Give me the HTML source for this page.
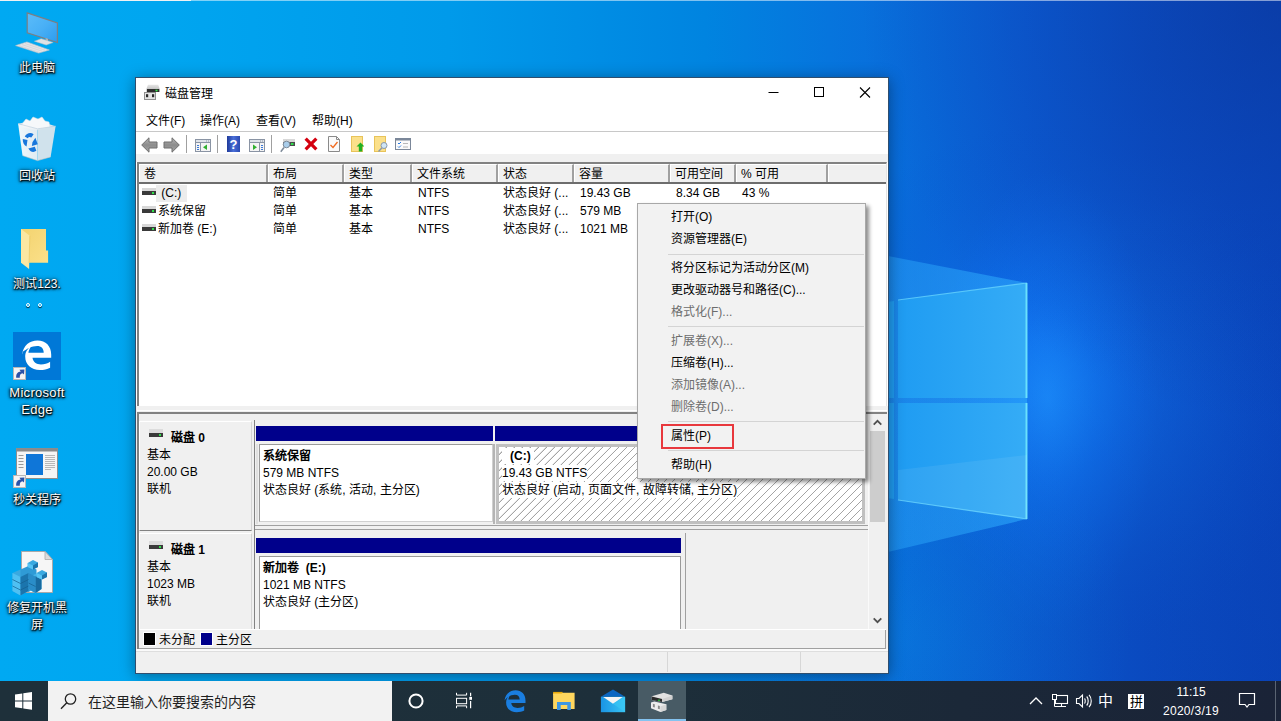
<!DOCTYPE html>
<html lang="zh-CN">
<head>
<meta charset="utf-8">
<title>磁盘管理</title>
<style>
*{box-sizing:border-box;margin:0;padding:0}
html,body{width:1281px;height:721px;overflow:hidden}
body{font-family:"Liberation Sans",sans-serif;font-size:12px;color:#000;position:relative;background:#0a5fd6}
.abs{position:absolute}
.cj{display:inline-block;white-space:nowrap;vertical-align:baseline}
#wall{position:absolute;left:0;top:0;width:1281px;height:721px}
/* desktop icons */
.dlabel{position:absolute;margin-top:1px;width:90px;text-align:center;color:#fff;font-size:12px;line-height:17px;text-shadow:0 1px 2px #000,0 1px 3px rgba(0,0,0,.9),0 0 4px rgba(0,0,0,.7),1px 1px 1px rgba(0,0,0,.8)}
/* window */
#win{position:absolute;left:135px;top:77px;width:754px;height:597px;background:#fff;border:1px solid #2f4e6e;box-shadow:0 2px 14px rgba(0,0,0,.38)}
#title{position:absolute;left:0;top:0;width:752px;height:30px;background:#fff}
#title .t{position:absolute;left:29px;top:8px;font-size:12px;line-height:16px}
#menubar{position:absolute;left:0;top:30px;width:752px;height:24px;background:#fff;border-bottom:1px solid #c8c8c8}
#menubar>span{position:absolute;top:5px;font-size:12px;line-height:16px;white-space:nowrap}
#toolbar{position:absolute;left:0;top:54px;width:752px;height:22px;background:#fff}
#gap1{position:absolute;left:0;top:76px;width:752px;height:8px;background:#f0f0f0}
.tsep{position:absolute;top:3px;width:1px;height:18px;background:#a0a0a0}
/* list */
#list{position:absolute;left:1px;top:84px;width:750px;height:246px;background:#fff;border-top:2px solid #828282;border-left:2px solid #828282;border-right:1px solid #e3e3e3}
#lhead{position:absolute;left:0;top:0;width:747px;height:20px;background:#f0f0f0;border-bottom:2px solid #6d6d6d}
.hc{position:absolute;top:0;height:18px;border-right:2px solid #a0a0a0;border-left:1px solid #fff;border-top:1px solid #fff;font-size:12px;line-height:18px;padding-left:4px;white-space:nowrap;background:#f0f0f0}
.cell{position:absolute;margin-top:1px;font-size:12px;line-height:16px;white-space:nowrap}
</style>
</head>
<body>
<svg id="wall" width="1281" height="721" viewBox="0 0 1281 721">
<defs>
<linearGradient id="wg" x1="0" y1="0" x2="1" y2="0">
<stop offset="0" stop-color="#00a9f2"/><stop offset="0.12" stop-color="#00a6f0"/><stop offset="0.35" stop-color="#009aea"/><stop offset="0.55" stop-color="#0084e0"/><stop offset="0.68" stop-color="#0870dc"/><stop offset="0.8" stop-color="#0b5cd6"/><stop offset="0.9" stop-color="#0b50cc"/><stop offset="1" stop-color="#0a48c4"/>
</linearGradient>
<radialGradient id="glow" cx="1045" cy="395" r="270" gradientUnits="userSpaceOnUse">
<stop offset="0" stop-color="#1c8cf8" stop-opacity=".95"/><stop offset="0.3" stop-color="#1274ec" stop-opacity=".6"/><stop offset="1" stop-color="#0a55cc" stop-opacity="0"/>
</radialGradient>
<radialGradient id="glow2" cx="1048" cy="400" r="1" gradientUnits="userSpaceOnUse" gradientTransform="translate(1048 400) scale(110 230) translate(-1048 -400)">
<stop offset="0" stop-color="#1a8cff" stop-opacity=".85"/><stop offset="0.45" stop-color="#0f78f8" stop-opacity=".45"/><stop offset="1" stop-color="#0c6cf0" stop-opacity="0"/>
</radialGradient>
<radialGradient id="glow3" cx="900" cy="640" r="230" gradientUnits="userSpaceOnUse">
<stop offset="0" stop-color="#0a86ea" stop-opacity=".5"/><stop offset="1" stop-color="#0a86ea" stop-opacity="0"/>
</radialGradient>
<radialGradient id="vtr" cx="1281" cy="0" r="420" gradientUnits="userSpaceOnUse">
<stop offset="0" stop-color="#0a3696" stop-opacity=".6"/><stop offset="1" stop-color="#0a3a9c" stop-opacity="0"/>
</radialGradient>
<radialGradient id="vbr" cx="1281" cy="721" r="520" gradientUnits="userSpaceOnUse">
<stop offset="0" stop-color="#08389c" stop-opacity=".35"/><stop offset="1" stop-color="#062f8e" stop-opacity="0"/>
</radialGradient>
<linearGradient id="pane" x1="0" y1="0" x2="1" y2="0">
<stop offset="0" stop-color="#1f9cf2"/><stop offset="1" stop-color="#35acf6"/>
</linearGradient>
<linearGradient id="beam" x1="1" y1="0" x2="0" y2="0">
<stop offset="0" stop-color="#30b0ff" stop-opacity=".55"/><stop offset=".35" stop-color="#30b0ff" stop-opacity=".38"/><stop offset="1" stop-color="#30b0ff" stop-opacity="0"/>
</linearGradient>
</defs>
<rect width="1281" height="721" fill="url(#wg)"/>
<rect width="1281" height="721" fill="url(#glow)"/>
<rect width="1281" height="721" fill="url(#glow2)"/>
<rect width="1281" height="721" fill="url(#glow3)"/>
<rect width="1281" height="721" fill="url(#vtr)"/>
<rect width="1281" height="721" fill="url(#vbr)"/>
<polygon points="1027,283 600,200 600,620 1027,519" fill="url(#beam)"/>
<polygon points="898,300 1027,283 1027,398 898,398" fill="url(#pane)"/>
<polygon points="898,403 1027,403 1027,519 898,500" fill="url(#pane)"/>
<polygon points="880,303 894,301 894,398 880,398" fill="#1f9cf2"/>
<polygon points="880,403 894,403 894,499 880,497" fill="#1f9cf2"/>
<polyline points="898,300 1027,283" fill="none" stroke="#6fdcff" stroke-width="1.2" opacity=".7"/><path d="M1026.500 283V398" stroke="#6fe6ff" stroke-width="2" opacity=".9"/>
<polyline points="1027,519 898,500" fill="none" stroke="#6fdcff" stroke-width="1.2" opacity=".7"/><path d="M1026.500 403V519" stroke="#6fe6ff" stroke-width="2" opacity=".9"/><polygon points="898,470 1027,455 1027,519 898,500" fill="#fff" opacity=".07"/>
<rect x="0" y="0" width="191" height="1" fill="#eef1f3"/><rect x="191" y="0" width="1090" height="1" fill="#fff" opacity=".5"/>
</svg>
<svg class="abs" style="left:12px;top:8px" width="52" height="50" viewBox="12 8 52 50">
<defs><linearGradient id="scr" x1="0" y1="0" x2="1" y2="1"><stop offset="0" stop-color="#5bbcf9"/><stop offset=".5" stop-color="#49b0f6"/><stop offset="1" stop-color="#2c9cee"/></linearGradient></defs>

<path d="M27.200 12.900L57.400 22.900V42.500L27.200 32.700z" fill="url(#scr)" stroke="#7b7f84" stroke-width="1.2"/>
<path d="M45.600 38l2.400 .8v3.500l-2.400-.8z" fill="#aeb4ba"/><path d="M34.400 41.200L41.200 38.700L53.100 42.500L46.200 45z" fill="#dfe2e5" stroke="#b9bec3" stroke-width=".5"/>
<path d="M15.600 45.600L26.900 41.900L49.400 50L38.700 53.100z" fill="#e2e4e7" stroke="#bfc3c8" stroke-width=".6"/>
<path d="M19 45.700l20 6.500M22 44.600l20 6.600M25 43.500l20 6.700" stroke="#c9cdd1" stroke-width=".6" fill="none"/>
</svg>
<div class="dlabel" style="left:-8px;top:59px"><span class="cj" style="width:3em">此电脑</span></div>
<svg class="abs" style="left:14px;top:114px" width="46" height="50" viewBox="14 114 46 50">
<defs><linearGradient id="bin" x1="0" y1="0" x2="1" y2="0"><stop offset="0" stop-color="#f9fbfc"/><stop offset="1" stop-color="#e9eef2"/></linearGradient></defs>
<path d="M18.100 123.700L36 120L55.600 126.200L37.500 128.800z" fill="#dbe6ee"/>
<path d="M22 124l4-5 4 2 3-4 5 2 4-2 3 4 4 1 1 5-14 3-13-3z" fill="#f6f8fa" stroke="#d9dfe4" stroke-width=".5"/>
<path d="M18.100 123.700L37.500 128.800L37.500 160.600L22.500 155.600z" fill="url(#bin)" opacity=".96"/>
<path d="M37.500 128.800L55.600 126.200L50.600 156.900L37.500 160.600z" fill="#dde5eb" opacity=".94"/>
<path d="M18.100 123.700L37.500 128.800L55.600 126.200" fill="none" stroke="#c7d6e2" stroke-width=".8"/>
<path transform="translate(29.500 142.500) scale(1.180) translate(-29.500 -142.500)" d="M25.500 137.500c1.500-3 5-4 7.500-2l-2 2.800c-1.200-.8-2.300-.5-3 .6zM34.500 138.500l2 5.500-5 1.500 .5-3.200zM23.800 139.500l4 .8-.8 5.500c-2.200-1.200-3.400-3.500-3.200-6.300zM28.500 147.500l5.500-1.300 1.300 3.300c-2.200 1.700-4.800 1.300-6.800-2z" fill="#1877dc"/>
<path d="M22.500 155.600L37.500 160.600L50.600 156.900" fill="none" stroke="#d9c9c0" stroke-width=".8" opacity=".7"/>
</svg>
<div class="dlabel" style="left:-8px;top:167px"><span class="cj" style="width:3em">回收站</span></div>
<svg class="abs" style="left:18px;top:226px" width="34" height="46" viewBox="18 226 34 46">
<defs><linearGradient id="fld" x1="0" y1="0" x2="1" y2="1"><stop offset="0" stop-color="#f3d36f"/><stop offset="1" stop-color="#fbe08a"/></linearGradient></defs>
<path d="M21 228.900H46V250.400H48.100V262.800H21z" fill="url(#fld)"/>
<path d="M21 228.900L29.800 235.800L29.100 269L21 262.800z" fill="#fbe7a2"/>
<path d="M29.800 235.800L29.100 262.800" stroke="#e6c35c" stroke-width=".6"/>
</svg>
<div class="dlabel" style="left:-8px;top:275px"><span class="cj" style="width:2em">测试</span>123.<br><span style="display:inline-block;width:12px;height:12px;vertical-align:top;position:relative"><i style="position:absolute;left:1px;top:10px;width:4px;height:4px;border:1px solid #fff;border-radius:50%;box-shadow:0 1px 1px rgba(0,0,0,.8)"></i></span><span style="display:inline-block;width:12px;height:12px;vertical-align:top;position:relative"><i style="position:absolute;left:1px;top:10px;width:4px;height:4px;border:1px solid #fff;border-radius:50%;box-shadow:0 1px 1px rgba(0,0,0,.8)"></i></span></div>
<svg class="abs" style="left:13px;top:332px" width="48" height="48" viewBox="0 0 48 48">
<rect width="48" height="48" fill="#0078d7"/>
<path d="M9 22.500C10.500 13.500 16.500 8.600 24.500 8.600c8.300 0 13.700 5.600 13.700 14v3.200H19.500c.5 4.300 3.900 6.600 8.500 6.600 3.400 0 6.500-.9 9.100-2.600v5.900c-2.800 1.500-6.300 2.300-10.200 2.300-8.800 0-14.700-5.200-14.700-13.400 0-4.500 2.400-8.400 6.400-10.600-2 2.100-3 4.700-3.200 6.800h15.300c0-4-2.400-6.700-6.600-6.700-5.300 0-10.500 2.800-15.100 6.400z" fill="#fff"/>
<rect x="0.500" y="35.500" width="12" height="12" fill="#f4f4f4" stroke="#b8b8b8"/>
<path d="M3.200 45.800C3 41.500 4.800 39.600 7.800 39.400L6.400 37.800L11.400 37.600L11 42.600L9.500 41.200C7.500 41.400 6.600 43 6.800 45.800z" fill="#2a52a8"/>
</svg>
<div class="dlabel" style="left:-8px;top:383px;font-size:13px;letter-spacing:.3px">Microsoft<br>Edge</div>
<svg class="abs" style="left:13px;top:447px" width="46" height="42" viewBox="13 447 46 42">
<rect x="16.500" y="448.500" width="41" height="30" fill="#f5f5f5" stroke="#8e8e8e"/>
<rect x="16.500" y="448.500" width="41" height="3" fill="#8a8a8a"/>
<rect x="26" y="454" width="17" height="21" fill="#0f76d8"/>
<path d="M18.500 455.500h5M18.500 458.500h5M18.500 461.500h5M18.500 464.500h5M18.500 467.500h5" stroke="#9a9a9a" stroke-width="1"/>
<path d="M45 455.500h10M45 457.500h10M45 459.500h10M45 461.500h10M45 463.500h10M45 465.500h10M45 467.500h10M45 469.500h6" stroke="#a8a8a8" stroke-width=".8"/>
<rect x="13.500" y="475.500" width="12" height="12" fill="#f4f4f4" stroke="#b8b8b8"/>
<path d="M16.200 485.800C16 481.500 17.800 479.600 20.800 479.400L19.400 477.800L24.400 477.600L24 482.600L22.500 481.200C20.500 481.400 19.600 483 19.800 485.800z" fill="#2a52a8"/>
</svg>
<div class="dlabel" style="left:-8px;top:491px"><span class="cj" style="width:4em">秒关程序</span></div>
<svg class="abs" style="left:10px;top:549px" width="46" height="50" viewBox="10 549 46 50">
<path d="M21.500 551.500H45L52.500 559.500V592.500H21.500z" fill="#f6f6f6" stroke="#a9a9a9"/>
<path d="M45 551.500V559.500H52.500z" fill="#dcdcdc" stroke="#a9a9a9" stroke-width=".8"/>
<g>
<path d="M12.500 573l8-3.500 8 3.500v18l-8 4.500-8-4.500z" fill="#3aa9e0"/>
<path d="M20.500 569.500l8-3.500 8 3.500v18l-8 4.500-8-4.500z" fill="#2f9bd6"/>
<path d="M28.500 577l7-3 6 3v12l-6 4.500-7-4.500z" fill="#43b3e8"/>
<path d="M12.500 573l8 4v18.500l-8-4.500z" fill="#4fc0f2"/>
<path d="M20.500 577l8-4v18l-8 4.500z" fill="#1b75ad"/>
<path d="M28.500 573l7 3.500v16.500l-7-4z" fill="#2a8dc8"/>
<path d="M35.500 576.500l6-3v15.500l-6 4z" fill="#186a9f"/>
<path d="M12.500 579.500l8 4M12.500 586l8 4M20.500 583.500l8-4M20.500 590l8-4M28.500 583l7 3.500" stroke="#15608f" stroke-width=".7" fill="none"/>
<path d="M27.700 563l5.300-3 5 2.500v4.500l-5.300 2.500-5-2.500z" fill="#3aa9e0"/><path d="M33 565.500l5-3v4.500l-5 2.500z" fill="#1b75ad"/><path d="M27.700 563l5.300 2.500v4l-5.300-2.500z" fill="#56c4f4"/>
<path d="M36.500 573l5.500-3 5 2.500v4.500l-5.500 2.500-5-2.500z" fill="#3aa9e0"/><path d="M42 575.500l5-3v4.500l-5 2.500z" fill="#1b75ad"/><path d="M36.500 573l5.500 2.500v4l-5.500-2.500z" fill="#56c4f4"/>
</g>
</svg>
<div class="dlabel" style="left:-8px;top:599px"><span class="cj" style="width:5em">修复开机黑</span><br><span class="cj" style="width:1em">屏</span></div>
<div id="win">

<div id="title">
<svg class="abs" style="left:8px;top:6px" width="16" height="17" viewBox="0 0 16 17"><defs><linearGradient id="dtop" x1="0" y1="0" x2="0" y2="1"><stop offset="0" stop-color="#e6e6e6"/><stop offset="1" stop-color="#c4c4c4"/></linearGradient></defs><path d="M4 .8H14.200L15.700 5H2.400z" fill="url(#dtop)"/><rect x="2.800" y="5" width="12.600" height="3" fill="#2e2e2e"/><rect x="11.500" y="5.700" width="2" height="1.600" fill="#3bea4e"/><rect x=".5" y="8.500" width="11" height="7" fill="#e4e4e4" stroke="#909090"/><rect x="2" y="10.200" width="2.200" height="3" fill="#2a2a2a"/><rect x="8" y="10.200" width="2.200" height="3" fill="#2a2a2a"/></svg>
<div class="t"><span class="cj" style="width:4em">磁盘管理</span></div>
<svg class="abs" style="left:614px;top:0" width="138" height="30" viewBox="0 0 138 30"><path d="M18.5 14.5h10" stroke="#000" stroke-width="1" fill="none"/><rect x="64.5" y="9.5" width="9" height="9" fill="none" stroke="#000"/><path d="M110 9.5l10 10M120 9.5l-10 10" stroke="#000" stroke-width="1.1" fill="none"/></svg>
</div>
<div id="menubar"><span style="left:10px"><span class="cj" style="width:2em">文件</span>(F)</span><span style="left:64px"><span class="cj" style="width:2em">操作</span>(A)</span><span style="left:120px"><span class="cj" style="width:2em">查看</span>(V)</span><span style="left:176px"><span class="cj" style="width:2em">帮助</span>(H)</span></div>
<div id="toolbar"><svg class="abs" style="left:5px;top:5px" width="17" height="16" viewBox="0 0 17 16"><defs><linearGradient id="ag" x1="0" y1="0" x2="0" y2="1"><stop offset="0" stop-color="#b8b8b8"/><stop offset=".5" stop-color="#8c8c8c"/><stop offset="1" stop-color="#a8a8a8"/></linearGradient></defs><path d="M0.700 8L8 0.800V5H16V11H8V15.200z" fill="url(#ag)" stroke="#6e6e6e" stroke-width="1"/></svg>
<svg class="abs" style="left:27px;top:5px" width="17" height="16" viewBox="0 0 17 16"><path d="M16.300 8L9 0.800V5H1V11H9V15.200z" fill="url(#ag)" stroke="#6e6e6e" stroke-width="1"/></svg>
<div class="tsep" style="left:50px"></div>
<svg class="abs" style="left:59px;top:7px" width="16" height="13" viewBox="0 0 16 13"><rect x=".5" y=".5" width="15" height="12" fill="#f4f4f4" stroke="#8a94a4"/><rect x=".5" y=".5" width="15" height="3" fill="#dfe3ea" stroke="#8a94a4"/><path d="M5.500 3.500v9" stroke="#8a94a4"/><path d="M2 6.500h2M2 8.500h2M2 10.500h2" stroke="#3a78d8" stroke-width="1"/><path d="M11 2h1M13 2h1" stroke="#8a94a4" stroke-width="1"/><path d="M12 5.500L8 8.200l4 2.700z" fill="#2fae2f"/></svg>
<div class="tsep" style="left:81px"></div>
<svg class="abs" style="left:91px;top:4px" width="13" height="16" viewBox="0 0 13 16"><defs><linearGradient id="hg" x1="0" y1="0" x2="1" y2="0"><stop offset="0" stop-color="#1f3a9a"/><stop offset=".5" stop-color="#4a6fd8"/><stop offset="1" stop-color="#2a49b0"/></linearGradient></defs><rect width="13" height="16" fill="url(#hg)"/><text x="6.500" y="13" font-family="Liberation Sans" font-weight="bold" font-size="13" fill="#fff" text-anchor="middle">?</text></svg>
<svg class="abs" style="left:113px;top:7px" width="16" height="13" viewBox="0 0 16 13"><rect x=".5" y=".5" width="15" height="12" fill="#f4f4f4" stroke="#8a94a4"/><rect x=".5" y=".5" width="15" height="3" fill="#dfe3ea" stroke="#8a94a4"/><path d="M10.500 3.500v9" stroke="#8a94a4"/><path d="M12 6.500h2M12 8.500h2M12 10.500h2" stroke="#3a78d8" stroke-width="1"/><path d="M11 2h1M13 2h1" stroke="#8a94a4" stroke-width="1"/><path d="M4 5.500L8 8.200l-4 2.700z" fill="#2fae2f"/></svg>
<div class="tsep" style="left:135px"></div>
<svg class="abs" style="left:144px;top:6px" width="16" height="15" viewBox="0 0 16 15"><rect x="3" y="1" width="12" height="3" fill="#d8d8d8"/><rect x="3" y="4" width="12" height="4" fill="#4a4a4a"/><rect x="11" y="5" width="2.500" height="2" fill="#2fe04a"/><circle cx="6.500" cy="6.500" r="3.300" fill="#a9cdea" stroke="#7d8a99" stroke-width="1"/><path d="M4 9.500L.8 13.800" stroke="#7d8a99" stroke-width="1.500"/></svg>
<svg class="abs" style="left:168px;top:5px" width="14" height="14" viewBox="0 0 14 14"><path d="M.5 2.800L2.800 .5L7 4.700L11.200 .5L13.500 2.800L9.300 7L13.500 11.200L11.200 13.500L7 9.300L2.800 13.500L.5 11.200L4.700 7z" fill="#d4000f"/></svg>
<svg class="abs" style="left:192px;top:4px" width="12" height="16" viewBox="0 0 12 16"><path d="M.5.500H8.500L11.500 3.500V15.500H.5z" fill="#fafafa" stroke="#8a8a8a"/><path d="M8.500.5V3.500H11.500" fill="none" stroke="#8a8a8a"/><path d="M2.500 9L5 11.500L9.500 6" fill="none" stroke="#f06a1f" stroke-width="1.300"/></svg>
<svg class="abs" style="left:215px;top:4px" width="13" height="16" viewBox="0 0 13 16"><rect x=".5" y=".5" width="11" height="15" fill="#fbe08a" stroke="#e8c35a"/><path d="M9.500 6.500l4 4h-2.300v5H7.800v-5H5.500z" fill="#22b022"/></svg>
<svg class="abs" style="left:238px;top:4px" width="14" height="16" viewBox="0 0 14 16"><rect x=".5" y=".5" width="11" height="15" fill="#fbe08a" stroke="#e8c35a"/><circle cx="10" cy="9.500" r="3" fill="#cfe5f6" stroke="#8a98a8" stroke-width="1"/><path d="M7.800 12L4.500 15.500" stroke="#8a98a8" stroke-width="1.400"/></svg>
<svg class="abs" style="left:259px;top:6px" width="16" height="12" viewBox="0 0 16 12"><rect x=".5" y=".5" width="15" height="11" fill="#fafafa" stroke="#7b8799"/><rect x=".5" y=".5" width="15" height="2" fill="#7b8799"/><path d="M3 5l1 1 2-2M3 8.500l1 1 2-2" fill="none" stroke="#2a7ae0" stroke-width="1"/><path d="M8 5.500h5M8 9h5" stroke="#b8b8b8" stroke-width="1"/></svg></div>
<div id="gap1"></div>
<div id="list">
<div id="lhead">
<div class="hc" style="left:0;width:129px"><span class="cj" style="width:1em">卷</span></div>
<div class="hc" style="left:129px;width:76px"><span class="cj" style="width:2em">布局</span></div>
<div class="hc" style="left:205px;width:68px"><span class="cj" style="width:2em">类型</span></div>
<div class="hc" style="left:273px;width:86px"><span class="cj" style="width:4em">文件系统</span></div>
<div class="hc" style="left:359px;width:76px"><span class="cj" style="width:2em">状态</span></div>
<div class="hc" style="left:435px;width:96px"><span class="cj" style="width:2em">容量</span></div>
<div class="hc" style="left:531px;width:66px"><span class="cj" style="width:4em">可用空间</span></div>
<div class="hc" style="left:597px;width:92px">% <span class="cj" style="width:2em">可用</span></div>
<div class="hc" style="left:689px;width:58px;border-right:none"></div>
</div>
<svg class="abs" style="left:3px;top:24px" width="14" height="8" viewBox="0 0 14 8"><rect x="0" y="0" width="14" height="3" fill="#d8d8d8"/><rect x="0" y="3" width="14" height="4" fill="#3a3a3a"/><rect x="10" y="4" width="2" height="2" fill="#2fe04a"/></svg><div class="abs" style="left:17px;top:21px;width:31px;height:17px;background:#ececec"></div><div class="cell" style="left:19px;top:20px">&nbsp;(C:)</div><div class="cell" style="left:134px;top:20px"><span class="cj" style="width:2em">简单</span></div><div class="cell" style="left:210px;top:20px"><span class="cj" style="width:2em">基本</span></div><div class="cell" style="left:279px;top:20px">NTFS</div><div class="cell" style="left:364px;top:20px"><span class="cj" style="width:4em">状态良好</span> (...</div><div class="cell" style="left:441px;top:20px">19.43 GB</div><div class="cell" style="left:537px;top:20px">8.34 GB</div><div class="cell" style="left:603px;top:20px">43 %</div><svg class="abs" style="left:3px;top:42px" width="14" height="8" viewBox="0 0 14 8"><rect x="0" y="0" width="14" height="3" fill="#d8d8d8"/><rect x="0" y="3" width="14" height="4" fill="#3a3a3a"/><rect x="10" y="4" width="2" height="2" fill="#2fe04a"/></svg><div class="cell" style="left:19px;top:38px"><span class="cj" style="width:4em">系统保留</span></div><div class="cell" style="left:134px;top:38px"><span class="cj" style="width:2em">简单</span></div><div class="cell" style="left:210px;top:38px"><span class="cj" style="width:2em">基本</span></div><div class="cell" style="left:279px;top:38px">NTFS</div><div class="cell" style="left:364px;top:38px"><span class="cj" style="width:4em">状态良好</span> (...</div><div class="cell" style="left:441px;top:38px">579 MB</div><svg class="abs" style="left:3px;top:60px" width="14" height="8" viewBox="0 0 14 8"><rect x="0" y="0" width="14" height="3" fill="#d8d8d8"/><rect x="0" y="3" width="14" height="4" fill="#3a3a3a"/><rect x="10" y="4" width="2" height="2" fill="#2fe04a"/></svg><div class="cell" style="left:19px;top:56px"><span class="cj" style="width:3em">新加卷</span> (E:)</div><div class="cell" style="left:134px;top:56px"><span class="cj" style="width:2em">简单</span></div><div class="cell" style="left:210px;top:56px"><span class="cj" style="width:2em">基本</span></div><div class="cell" style="left:279px;top:56px">NTFS</div><div class="cell" style="left:364px;top:56px"><span class="cj" style="width:4em">状态良好</span> (...</div><div class="cell" style="left:441px;top:56px">1021 MB</div>
</div>
<div class="abs" style="left:0px;top:328px;width:752px;height:267px;background:#f0f0f0"></div>
<div class="abs" style="left:1px;top:332px;width:750px;height:1px;background:#fff"></div>
<div class="abs" style="left:1px;top:334px;width:750px;height:2px;background:#828282"></div>
<div class="abs" style="left:1px;top:334px;width:2px;height:237px;background:#828282"></div>
<div class="abs" style="left:3px;top:343px;width:113px;height:110px;border-top:1px solid #fff;border-left:1px solid #fff;border-bottom:1px solid #828282;border-right:1px solid #d4d4d4;background:#f0f0f0"></div>
<svg class="abs" style="left:13px;top:351px" width="14" height="9" viewBox="0 0 14 9"><rect x="0" y="0" width="14" height="4" fill="#dcdcdc"/><rect x="0" y="4" width="14" height="4" fill="#3a3a3a"/><rect x="10" y="5" width="2" height="2" fill="#2fe04a"/></svg>
<div class="cell" style="left:35px;top:351px;font-weight:bold"><span class="cj" style="width:2em">磁盘</span> 0</div>
<div class="cell" style="left:11px;top:368px"><span class="cj" style="width:2em">基本</span></div>
<div class="cell" style="left:11px;top:385px">20.00 GB</div>
<div class="cell" style="left:11px;top:402px"><span class="cj" style="width:2em">联机</span></div>
<div class="abs" style="left:3px;top:455px;width:113px;height:97px;border-top:1px solid #fff;border-left:1px solid #fff;border-bottom:1px solid #828282;border-right:1px solid #d4d4d4;background:#f0f0f0"></div>
<svg class="abs" style="left:13px;top:463px" width="14" height="9" viewBox="0 0 14 9"><rect x="0" y="0" width="14" height="4" fill="#dcdcdc"/><rect x="0" y="4" width="14" height="4" fill="#3a3a3a"/><rect x="10" y="5" width="2" height="2" fill="#2fe04a"/></svg>
<div class="cell" style="left:35px;top:463px;font-weight:bold"><span class="cj" style="width:2em">磁盘</span> 1</div>
<div class="cell" style="left:11px;top:480px"><span class="cj" style="width:2em">基本</span></div>
<div class="cell" style="left:11px;top:497px">1023 MB</div>
<div class="cell" style="left:11px;top:514px"><span class="cj" style="width:2em">联机</span></div>
<div class="abs" style="left:118px;top:342px;width:1px;height:210px;background:#828282"></div>
<div class="abs" style="left:120px;top:348px;width:237px;height:15px;background:#00008b"></div>
<div class="abs" style="left:359px;top:348px;width:370px;height:15px;background:#00008b"></div>
<div class="abs" style="left:123px;top:366px;width:234px;height:78px;background:#fff;border:1px solid #9a9a9a;border-right-color:#d0d0d0;border-bottom-color:#d0d0d0"></div>
<div class="abs" style="left:357px;top:366px;width:2px;height:80px;background:#b4b4b4"></div>
<div class="abs" style="left:120px;top:366px;width:2px;height:80px;background:#e0e0e0"></div>
<div class="cell" style="left:127px;top:369px;font-weight:bold"><span class="cj" style="width:4em">系统保留</span></div>
<div class="cell" style="left:127px;top:386px">579 MB NTFS</div>
<div class="cell" style="left:127px;top:403px"><span class="cj" style="width:4em">状态良好</span> (<span class="cj" style="width:2em">系统</span>, <span class="cj" style="width:2em">活动</span>, <span class="cj" style="width:3em">主分区</span>)</div>
<div class="abs" style="left:360px;top:366px;width:369px;height:80px;border:3px solid #c0c0c0;background-color:#fff;background-image:repeating-linear-gradient(135deg,transparent 0,transparent 4.9px,#a4a4a4 5px,#a4a4a4 5.66px)"></div>
<div class="cell" style="left:374px;top:369px;font-weight:bold;background:#fff;padding:0 3px 0 8px;margin-left:-8px">(C:)</div>
<div class="cell" style="left:366px;top:386px;background:#fff">19.43 GB NTFS</div>
<div class="cell" style="left:366px;top:403px;background:#fff"><span class="cj" style="width:4em">状态良好</span> (<span class="cj" style="width:2em">启动</span>, <span class="cj" style="width:4em">页面文件</span>, <span class="cj" style="width:4em">故障转储</span>, <span class="cj" style="width:3em">主分区</span>)</div>
<div class="abs" style="left:119px;top:447px;width:613px;height:1px;background:#a0a0a0"></div>
<div class="abs" style="left:119px;top:451px;width:613px;height:1px;background:#a0a0a0"></div>
<div class="abs" style="left:120px;top:460px;width:425px;height:15px;background:#00008b"></div>
<div class="abs" style="left:123px;top:478px;width:422px;height:75px;background:#fff;border:1px solid #9a9a9a;border-bottom:none"></div>
<div class="abs" style="left:549px;top:455px;width:1px;height:97px;background:#a0a0a0"></div>
<div class="cell" style="left:127px;top:481px;font-weight:bold"><span class="cj" style="width:3em">新加卷</span>&nbsp; (E:)</div>
<div class="cell" style="left:127px;top:498px">1021 MB NTFS</div>
<div class="cell" style="left:127px;top:515px"><span class="cj" style="width:4em">状态良好</span> (<span class="cj" style="width:3em">主分区</span>)</div>
<div class="abs" style="left:733px;top:336px;width:17px;height:216px;background:#f0f0f0"></div>
<div class="abs" style="left:734px;top:353px;width:15px;height:91px;background:#cdcdcd"></div>
<svg class="abs" style="left:737px;top:341px" width="9" height="7" viewBox="0 0 9 7"><path d="M0.7 5.6L4.5 1.8L8.3 5.6" fill="none" stroke="#505050" stroke-width="1.8"/></svg>
<svg class="abs" style="left:737px;top:539px" width="9" height="7" viewBox="0 0 9 7"><path d="M0.7 1.4L4.5 5.2L8.3 1.4" fill="none" stroke="#505050" stroke-width="1.8"/></svg>
<div class="abs" style="left:3px;top:552px;width:748px;height:19px;background:#f0f0f0"></div>
<div class="abs" style="left:7px;top:554px;width:13px;height:14px;background:#000;border:1px solid #fff"></div>
<div class="cell" style="left:23px;top:553px"><span class="cj" style="width:3em">未分配</span></div>
<div class="abs" style="left:64px;top:554px;width:13px;height:14px;background:#00008b;border:1px solid #fff"></div>
<div class="cell" style="left:80px;top:553px"><span class="cj" style="width:3em">主分区</span></div>
<div class="abs" style="left:3px;top:570px;width:747px;height:1px;background:#a0a0a0"></div><div class="abs" style="left:749px;top:552px;width:1px;height:19px;background:#a0a0a0"></div><div class="abs" style="left:3px;top:551px;width:747px;height:1px;background:#fff"></div><div class="abs" style="left:0px;top:571px;width:752px;height:2px;background:#fafafa"></div>
<div class="abs" style="left:0px;top:573px;width:752px;height:1px;background:#dedede"></div><div class="abs" style="left:732px;top:336px;width:1px;height:215px;background:#fafafa"></div>
<div class="abs" style="left:531px;top:574px;width:1px;height:20px;background:#d7d7d7"></div>
<div class="abs" style="left:664px;top:574px;width:1px;height:20px;background:#d7d7d7"></div>

</div>
<div id="ctx" class="abs" style="left:637px;top:203px;width:229px;height:276px;background:#f2f2f2;border:1px solid #a8a8a8;box-shadow:3px 3px 4px rgba(0,0,0,.45)">
<div class="cell" style="left:33px;top:4px;color:#000"><span class="cj" style="width:2em">打开</span>(O)</div>
<div class="cell" style="left:33px;top:26px;color:#000"><span class="cj" style="width:5em">资源管理器</span>(E)</div>
<div class="abs" style="left:30px;top:50px;width:196px;height:1px;background:#d4d4d4"></div>
<div class="cell" style="left:33px;top:55px;color:#000"><span class="cj" style="width:10em">将分区标记为活动分区</span>(M)</div>
<div class="cell" style="left:33px;top:77px;color:#000"><span class="cj" style="width:9em">更改驱动器号和路径</span>(C)...</div>
<div class="cell" style="left:33px;top:99px;color:#6d6d6d"><span class="cj" style="width:3em">格式化</span>(F)...</div>
<div class="abs" style="left:30px;top:122px;width:196px;height:1px;background:#d4d4d4"></div>
<div class="cell" style="left:33px;top:128px;color:#6d6d6d"><span class="cj" style="width:3em">扩展卷</span>(X)...</div>
<div class="cell" style="left:33px;top:150px;color:#000"><span class="cj" style="width:3em">压缩卷</span>(H)...</div>
<div class="cell" style="left:33px;top:172px;color:#6d6d6d"><span class="cj" style="width:4em">添加镜像</span>(A)...</div>
<div class="cell" style="left:33px;top:194px;color:#6d6d6d"><span class="cj" style="width:3em">删除卷</span>(D)...</div>
<div class="abs" style="left:30px;top:217px;width:196px;height:1px;background:#d4d4d4"></div>
<div class="cell" style="left:33px;top:223px;color:#000"><span class="cj" style="width:2em">属性</span>(P)</div>
<div class="abs" style="left:30px;top:246px;width:196px;height:1px;background:#d4d4d4"></div>
<div class="cell" style="left:33px;top:252px;color:#000"><span class="cj" style="width:2em">帮助</span>(H)</div>
<div class="abs" style="left:23px;top:220px;width:73px;height:25px;border:2px solid #e8383d"></div>
</div>
<div id="taskbar" class="abs" style="left:0;top:681px;width:1281px;height:40px;background:linear-gradient(90deg,#1e303a 0,#1d2f3a 50%,#1b2838 75%,#1a2337 100%)">
<svg class="abs" style="left:15px;top:11px" width="18" height="18" viewBox="0 0 18 18"><path d="M0 2.5L7.3 1.5V8.4H0zM8.3 1.35L17 0.1V8.4H8.3zM0 9.4H7.3V16.3L0 15.3zM8.3 9.4H17V17.7L8.3 16.45z" fill="#fff"/></svg>
<div class="abs" style="left:48px;top:0;width:344px;height:40px;background:#f2f2f2"></div>
<svg class="abs" style="left:60px;top:11px" width="18" height="18" viewBox="0 0 18 18"><circle cx="10.5" cy="7" r="5.2" fill="none" stroke="#222" stroke-width="1.3"/><path d="M6.8 10.8L1 16.8" stroke="#222" stroke-width="1.4"/></svg>
<div class="abs" style="left:88px;top:11px;font-size:14px;line-height:20px;color:#1f1f1f;white-space:nowrap"><span class="cj" style="width:12em">在这里输入你要搜索的内容</span></div>
<svg class="abs" style="left:407px;top:11px" width="18" height="18" viewBox="0 0 18 18"><circle cx="9" cy="9" r="6.6" fill="none" stroke="#fff" stroke-width="2"/></svg>
<svg class="abs" style="left:455px;top:11px" width="18" height="18" viewBox="0 0 18 18"><path d="M1.500 .8V3.100H11.600V.8M1.500 16.200V13.900H11.600V16.200" fill="none" stroke="#fff" stroke-width="1"/><rect x="1.500" y="6.300" width="10.100" height="5.400" fill="none" stroke="#fff" stroke-width="1"/><path d="M15.600 .8V4.200M15.600 9V16.200" stroke="#fff" stroke-width="1.200"/><rect x="14.300" y="4.900" width="2.700" height="2.900" fill="#fff"/></svg>
<svg class="abs" style="left:503px;top:8px" width="24" height="24" viewBox="0 0 24 24"><path d="M1.5 11.5C2.2 5.5 6.5 1.2 12.6 1.2c6 0 9.9 4.2 9.9 10.3v2.6H8.3c.3 3.2 2.9 4.9 6.3 4.9 2.5 0 4.7-.7 6.6-1.9v4.4c-2 1.1-4.6 1.7-7.4 1.7-6.4 0-10.7-3.8-10.7-9.8 0-3.300 1.8-6.200 4.700-7.800-1.500 1.600-2.200 3.500-2.400 5h11.300c0-2.900-1.700-4.900-4.800-4.900-3.900 0-7.700 2-10.400 5.800z" fill="#1a7ee0"/></svg>
<svg class="abs" style="left:552px;top:10px" width="24" height="20" viewBox="552 10 24 20"><path d="M553.100 10.900H562.600V14H553.100z" fill="#e8a90a"/><path d="M553.100 12.500H561.500L562.600 11.800H574.600V28H553.100z" fill="#ffd75e"/><path d="M557 21H570.800V29H567.300V24H560.700V29H557z" fill="#3d97e4"/></svg>
<svg class="abs" style="left:600px;top:8px" width="26" height="24" viewBox="600 8 26 24"><defs><linearGradient id="ml" x1="0" y1="0" x2="1" y2="0"><stop offset="0" stop-color="#1a94e4"/><stop offset="1" stop-color="#38c4f4"/></linearGradient></defs><path d="M600.900 15.700L613 8.500L625.100 15.700z" fill="#0b66c2"/><rect x="600.900" y="15.700" width="24.200" height="15.500" fill="url(#ml)"/><path d="M603.200 16.100H622.700L613 22.800z" fill="#f4f4f4"/><path d="M613 22.800L625.100 15.900V31.200z" fill="#3ccaf6" opacity=".55"/></svg>
<div class="abs" style="left:638px;top:0;width:48px;height:40px;background:#485b65"></div><div class="abs" style="left:638px;top:38px;width:48px;height:2px;background:#84c3f0"></div>
<svg class="abs" style="left:649px;top:10px" width="26" height="23" viewBox="649 10 26 23"><path d="M651.800 15.300L663.800 11.700L672.400 14.400V18.300L662.100 21.100L651.800 18.900z" fill="#e2e2e2"/><path d="M651.800 15.600L662.100 18V21.100L651.800 18.900z" fill="#2b2b2b"/><path d="M662.100 18L672.400 14.600V18.300L662.100 21.100z" fill="#d0d0d0"/><rect x="657.900" y="18.600" width="2" height="1.300" fill="#22c03a"/><path d="M651 21.400L654.300 20.500L666.300 23.300V28.900L660.400 31.100L651 27.200z" fill="#ececec"/><path d="M660.400 25.500L666.300 23.300V28.900L660.400 31.100z" fill="#d6d6d6"/><path d="M652.900 22.800l1.900 .5v3.300l-1.900-.6zM657.900 24.500l1.900 .5v3.300l-1.900-.6z" fill="#8a8a8a"/></svg>
<svg class="abs" style="left:1029px;top:15px" width="14" height="9" viewBox="0 0 14 9"><path d="M1 8L7 2l6 6" fill="none" stroke="#fff" stroke-width="1.3"/></svg>
<svg class="abs" style="left:1051px;top:12px" width="18" height="16" viewBox="0 0 18 16"><rect x="4.500" y="2.500" width="12" height="8" fill="none" stroke="#fff" stroke-width="1.1"/><path d="M10.500 10.500v3M6 13.500h9" stroke="#fff" stroke-width="1.1"/><rect x="1.500" y="1.500" width="4" height="5" fill="#1b2738" stroke="#fff" stroke-width="1"/><path d="M3.500 6.500v7h3" fill="none" stroke="#fff" stroke-width="1"/></svg>
<svg class="abs" style="left:1075px;top:12px" width="18" height="16" viewBox="0 0 18 16"><path d="M1.500 5.500h2.500l3.500-3.500v12l-3.500-3.500h-2.500z" fill="none" stroke="#fff" stroke-width="1.1"/><path d="M9.500 5.500c1 .8 1 4.200 0 5M11.700 3.500c2 2 2 7 0 9M14 1.800c3 3 3 9.400 0 12.400" fill="none" stroke="#fff" stroke-width="1.1"/></svg>
<div class="abs" style="left:1098px;top:11px;font-size:15px;line-height:18px;color:#fff"><span class="cj" style="width:1em">中</span></div>
<div class="abs" style="left:1128px;top:13px;width:16px;height:15px;background:#fff;color:#000;font-size:13px;line-height:15px;text-align:center;overflow:hidden"><span class="cj" style="width:1em">拼</span></div>
<div class="abs" style="left:1150px;top:3px;width:82px;text-align:center;color:#fff;font-size:12px;line-height:16px">11:15</div>
<div class="abs" style="left:1150px;top:22px;width:82px;text-align:center;color:#fff;font-size:12px;line-height:16px;letter-spacing:.3px">2020/3/19</div>
<svg class="abs" style="left:1238px;top:11px" width="18" height="18" viewBox="0 0 18 18"><path d="M1.500 1.500h15v11h-5.500l-2 2.500-2-2.500h-5.500z" fill="none" stroke="#fff" stroke-width="1.2"/></svg>
<div class="abs" style="left:1275px;top:0;width:1px;height:40px;background:#5a6472"></div>
</div>
</body>
</html>
